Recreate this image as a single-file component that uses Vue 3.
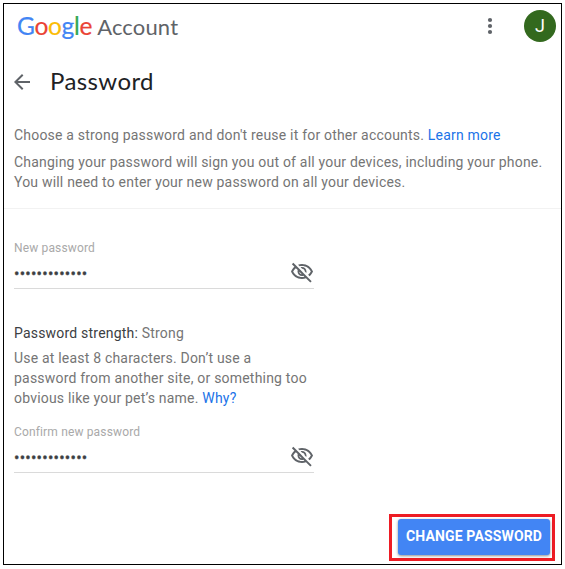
<script setup>
import { ref } from 'vue'

const logo = [
  ['G', '#4285f4'], ['o', '#ea4335'], ['o', '#fbbc05'],
  ['g', '#4285f4'], ['l', '#34a853'], ['e', '#ea4335'],
]
const dots = ref('•'.repeat(13))
const eyeOff = [
  'M10.58,7.25l1.56,1.56c1.38,0.07,2.47,1.17,2.54,2.54l1.56,1.56C16.4,12.47,16.5,12,16.5,11.5C16.5,9.02,14.48,7,12,7C11.5,7,11.03,7.1,10.58,7.25z',
  'M12,6c3.79,0,7.17,2.13,8.82,5.5c-0.64,1.32-1.56,2.44-2.66,3.33l1.42,1.42c1.51-1.26,2.7-2.89,3.43-4.74C21.27,7.11,17,4,12,4c-1.4,0-2.73,0.25-3.98,0.7L9.63,6.3C10.4,6.12,11.19,6,12,6z',
  'M16.43,15.93l-1.25-1.25l-1.27-1.27l-3.82-3.82L8.82,8.32L7.57,7.07L6.09,5.59L3.31,2.81L1.89,4.22l2.53,2.53C2.92,8.02,1.73,9.64,1,11.5C2.73,15.89,7,19,12,19c1.4,0,2.73-0.25,3.98-0.7l4.3,4.3l1.41-1.41l-3.78-3.78L16.43,15.93z M11.86,14.19c-1.38-0.07-2.47-1.17-2.54-2.54L11.86,14.19z M12,17c-3.79,0-7.17-2.13-8.82-5.5c0.64-1.32,1.56-2.44,2.66-3.33l1.91,1.91C7.6,10.53,7.5,11,7.5,11.5c0,2.48,2.02,4.5,4.5,4.5c0.5,0,0.97-0.1,1.42-0.25l0.95,0.95C13.6,16.88,12.81,17,12,17z',
]
</script>

<template>
  <main class="frame">
    <header class="top">
      <div class="brand">
        <span class="google"><span v-for="([c, color], i) in logo" :key="i" :style="{ color }">{{ c }}</span></span>
        <span class="account">Account</span>
      </div>
      <svg class="more" width="24" height="24" viewBox="0 0 24 24"><circle cx="12" cy="6" r="2.1" /><circle cx="12" cy="12" r="2.1" /><circle cx="12" cy="18" r="2.1" /></svg>
      <div class="avatar">J</div>
    </header>
    <div class="title">
      <svg width="24" height="24" viewBox="0 0 24 24"><path d="M20 11H7.83l5.59-5.59L12 4l-8 8 8 8 1.41-1.41L7.83 13H20v-2z" /></svg>
      <h1>Password</h1>
    </div>
    <section class="intro">
      <p class="l1">Choose a strong password and don't reuse it for other accounts. <a>Learn more</a></p>
      <p class="l2">Changing your password will sign you out of all your devices, including your phone.</p>
      <p class="l3">You will need to enter your new password on all your devices.</p>
    </section>
    <section class="form">
      <div class="field">
        <label>New password</label>
        <div class="value">
          <span class="dots">{{ dots }}</span>
          <svg width="24" height="24" viewBox="0 0 24 24"><path v-for="d in eyeOff" :key="d" :d="d" /></svg>
        </div>
      </div>
      <div class="hint">
        <p class="strength"><b>Password strength:</b> Strong</p>
        <p>Use at least 8 characters. Don’t use a<br>password from another site, or something too<br>obvious like your pet’s name. <a>Why?</a></p>
      </div>
      <div class="field">
        <label>Confirm new password</label>
        <div class="value">
          <span class="dots">{{ dots }}</span>
          <svg width="24" height="24" viewBox="0 0 24 24"><path v-for="d in eyeOff" :key="d" :d="d" /></svg>
        </div>
      </div>
    </section>
    <footer class="actions">
      <div class="highlight"><button>CHANGE PASSWORD</button></div>
    </footer>
  </main>
</template>

<style>
body { background: #fff; }
</style>

<style scoped>
* { box-sizing: border-box; }
p, h1 { margin: 0; }
.frame {
  display: flex;
  flex-direction: column;
  width: 559px;
  height: 562px;
  margin: 3px 0 0 3px;
  border: 1px solid #000;
  font: 14px/20px Roboto, sans-serif;
  letter-spacing: 0.2px;
  color: #757575;
  white-space: nowrap;
}
svg { display: block; flex: none; fill: #5f6368; }
a { color: #1a73e8; }
.top {
  display: flex;
  align-items: center;
  height: 44px;
  padding: 0 5px 0 13px;
}
.brand {
  display: flex;
  flex: 1;
  align-items: baseline;
  gap: 5px;
  font-family: Lato, sans-serif;
  color: #5f6368;
}
.google { font-size: 24.5px; letter-spacing: -0.3px; -webkit-text-stroke: 0.2px; }
.account { font-size: 22px; letter-spacing: 0.15px; }
.more { margin-right: 22px; }
.avatar {
  width: 32px;
  height: 32px;
  border-radius: 50%;
  background: #33691e;
  color: #fff;
  font-size: 18px;
  line-height: 32px;
  text-align: center;
  letter-spacing: 0;
}
.title {
  display: flex;
  align-items: center;
  gap: 16px;
  height: 68px;
  padding-left: 6px;
}
h1 {
  font: 400 24px/30px Lato, sans-serif;
  height: 32px;
  letter-spacing: 0.4px;
  color: #202124;
}
.intro {
  height: 93px;
  padding: 9px 10px 0;
  border-bottom: 1px solid #f2f2f2;
}
.l1 { margin-bottom: 7px; }
.form { width: 320px; padding: 29px 10px 0; }
.field {
  width: 300px;
  height: 51px;
  border-bottom: 1px solid #dadada;
}
label {
  display: block;
  font-size: 12px;
  line-height: 20px;
  letter-spacing: 0.15px;
  color: #a9a9a9;
}
.value {
  display: flex;
  align-items: center;
  justify-content: space-between;
  height: 28px;
}
.dots {
  padding-top: 3px;
  font-size: 16px;
  letter-spacing: 0.25px;
  color: #3c4043;
  -webkit-text-stroke: 0.3px;
}
.hint { margin: 34px 0 14px; }
.strength { margin-bottom: 5px; }
b { font-weight: 400; color: #3c4043; }
.actions {
  display: flex;
  justify-content: flex-end;
  margin-top: auto;
  padding: 0 6px 3px 0;
}
.highlight {
  width: 166px;
  height: 47px;
  padding: 2px 3px 3px 6px;
  border: 3px solid #ed1c24;
}
button {
  display: block;
  width: 152px;
  height: 36px;
  padding: 0 0 2px;
  border: 0;
  border-radius: 3px;
  background: #4285f4;
  box-shadow: 0 1px 3px rgba(0, 0, 0, 0.45);
  color: #fff;
  font: 700 14px/34px Roboto, sans-serif;
  letter-spacing: 0.15px;
}
</style>
